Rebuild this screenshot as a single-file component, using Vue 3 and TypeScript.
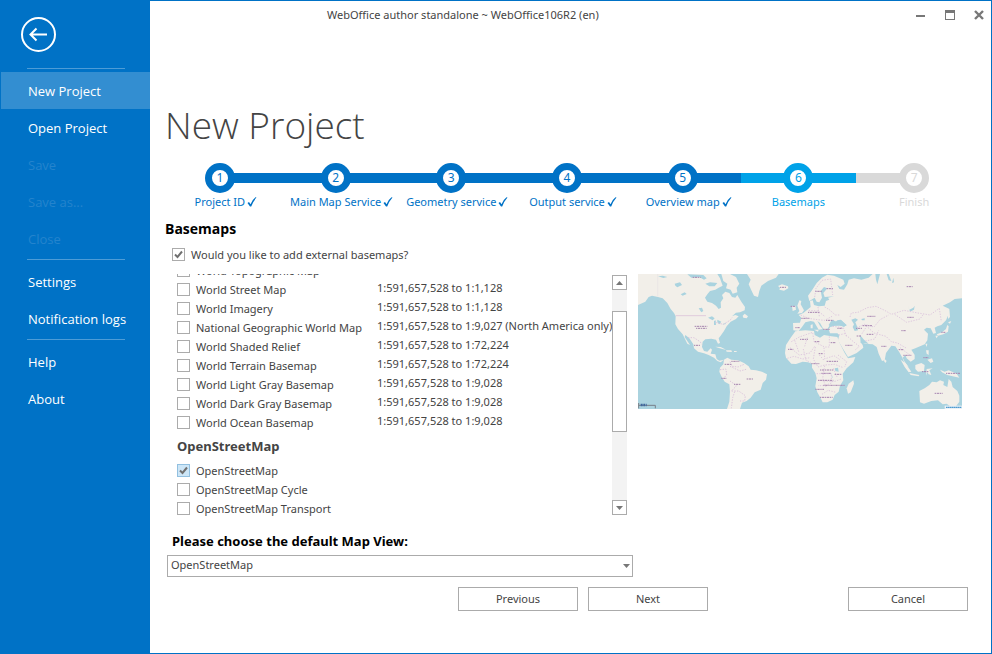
<script setup lang="ts">
import { ref } from 'vue'

interface MenuItem { label: string; active?: boolean; disabled?: boolean }
interface Step { label: string; state: 'done' | 'current' | 'todo' }
interface Basemap { name: string; scale: string; checked: boolean }

const menuGroups: MenuItem[][] = [
  [
    { label: 'New Project', active: true },
    { label: 'Open Project' },
    { label: 'Save', disabled: true },
    { label: 'Save as...', disabled: true },
    { label: 'Close', disabled: true },
  ],
  [{ label: 'Settings' }, { label: 'Notification logs' }],
  [{ label: 'Help' }, { label: 'About' }],
]

const steps: Step[] = [
  { label: 'Project ID', state: 'done' },
  { label: 'Main Map Service', state: 'done' },
  { label: 'Geometry service', state: 'done' },
  { label: 'Output service', state: 'done' },
  { label: 'Overview map', state: 'done' },
  { label: 'Basemaps', state: 'current' },
  { label: 'Finish', state: 'todo' },
]

const useExternal = ref(true)
const defaultView = ref('OpenStreetMap')

const worldMaps = ref<Basemap[]>([
  { name: 'World Topographic Map', scale: '', checked: false },
  { name: 'World Street Map', scale: '1:591,657,528 to 1:1,128', checked: false },
  { name: 'World Imagery', scale: '1:591,657,528 to 1:1,128', checked: false },
  { name: 'National Geographic World Map', scale: '1:591,657,528 to 1:9,027 (North America only)', checked: false },
  { name: 'World Shaded Relief', scale: '1:591,657,528 to 1:72,224', checked: false },
  { name: 'World Terrain Basemap', scale: '1:591,657,528 to 1:72,224', checked: false },
  { name: 'World Light Gray Basemap', scale: '1:591,657,528 to 1:9,028', checked: false },
  { name: 'World Dark Gray Basemap', scale: '1:591,657,528 to 1:9,028', checked: false },
  { name: 'World Ocean Basemap', scale: '1:591,657,528 to 1:9,028', checked: false },
])

const osmMaps = ref<Basemap[]>([
  { name: 'OpenStreetMap', scale: '', checked: true },
  { name: 'OpenStreetMap Cycle', scale: '', checked: false },
  { name: 'OpenStreetMap Transport', scale: '', checked: false },
])
</script>

<template>
  <div class="window">
    <aside class="sidebar">
      <button class="back" type="button" aria-label="Back">
        <svg viewBox="0 0 36 36" width="36" height="36" fill="none" stroke="#fff" stroke-width="2">
          <circle cx="18.5" cy="17.5" r="16.5" />
          <path d="M10 17.5H27M16.5 11.5L10.5 17.5L16.5 23.5" />
        </svg>
      </button>
      <nav>
        <ul v-for="(group, g) in menuGroups" :key="g" class="group">
          <li v-for="item in group" :key="item.label">
            <button type="button" class="item" :class="{ active: item.active }" :disabled="item.disabled">{{ item.label }}</button>
          </li>
        </ul>
      </nav>
    </aside>

    <main class="main">
      <header class="titlebar">
        <span class="caption">WebOffice author standalone ~ WebOffice106R2 (en)</span>
        <div class="controls">
          <button type="button" aria-label="Minimize">
            <svg viewBox="0 0 12 12" width="12" height="12"><path d="M1 6h9v2H1z" fill="#777" /></svg>
          </button>
          <button type="button" aria-label="Maximize">
            <svg viewBox="0 0 12 12" width="12" height="12"><path d="M1 1h10v10H1zM2 4v6h8V4z" fill="#777" fill-rule="evenodd" /></svg>
          </button>
          <button type="button" aria-label="Close">
            <svg viewBox="0 0 12 12" width="12" height="12"><path d="M2 2L10 10M10 2L2 10" stroke="#777" stroke-width="2.4" /></svg>
          </button>
        </div>
      </header>

      <h1>New Project</h1>

      <ol class="steps">
        <li v-for="(step, i) in steps" :key="step.label" class="step" :class="step.state">
          <div class="track"><span class="dot">{{ i + 1 }}</span></div>
          <div class="step-label">
            <span class="step-text">{{ step.label }}</span>
            <svg v-if="step.state === 'done'" class="tick" viewBox="0 0 10 10" width="10" height="10">
              <path d="M0.5 6L2 5L3.5 7.2Q5.5 2.5 8.5 0.3L9.5 0.6Q6 4.5 4.2 9.6H3Z" fill="#0072c6" />
            </svg>
          </div>
        </li>
      </ol>

      <h2>Basemaps</h2>
      <label class="check external">
        <input v-model="useExternal" type="checkbox" />
        <span>Would you like to add external basemaps?</span>
      </label>

      <div class="columns">
        <div class="picker">
          <div class="list">
            <div v-for="map in worldMaps" :key="map.name" class="row">
              <label class="check"><input v-model="map.checked" type="checkbox" /><span>{{ map.name }}</span></label>
              <span class="scale">{{ map.scale }}</span>
            </div>
            <h3>OpenStreetMap</h3>
            <div v-for="map in osmMaps" :key="map.name" class="row">
              <label class="check"><input v-model="map.checked" type="checkbox" :class="{ hot: map.checked }" /><span>{{ map.name }}</span></label>
            </div>
          </div>
          <div class="scrollbar">
            <button type="button" aria-label="Scroll up"><svg viewBox="0 0 7 4" width="7" height="4"><path d="M0 4L3.5 0L7 4Z" fill="#777" /></svg></button>
            <div class="rail"><div class="thumb"></div></div>
            <button type="button" aria-label="Scroll down"><svg viewBox="0 0 7 4" width="7" height="4"><path d="M0 0H7L3.5 4Z" fill="#777" /></svg></button>
          </div>
        </div>

        <svg class="map" viewBox="0 0 972 405" role="img" aria-label="World map preview">
          <rect width="972" height="405" fill="#aad3df" />
          <g transform="translate(-24 -27)">
            <g fill="#f2efe9">
              <path d="M24 27H262L270 40L278 62L266 68L256 74L240 78L232 88L225 98L232 110L246 114L258 122L266 132L273 128L272 112L280 100L276 90L286 80L298 84L306 96L316 98L322 90L334 110L345 126L344 136L330 142L318 143L306 154L316 150L326 154L318 162L302 170L290 184L282 198L272 212L266 220L270 234L264 236L258 224L244 221L226 223L218 230L216 246L222 258L232 260L242 250L246 254L242 266L256 268L260 282L268 287L276 286L282 284L272 292L262 288L252 278L236 270L222 265L204 260L192 250L190 238L178 220L166 210L164 216L180 240L172 236L158 208L144 192L136 178L137 154L132 144L122 132L112 114L98 100L84 96L66 92L56 96L46 110L24 120Z" />
              <path d="M351 27H446L438 38L414 48L394 62L388 78L384 96L372 92L364 76L356 58L362 44Z" />
              <path d="M274 27H300L318 36L328 56L320 68L322 82L308 86L302 74L288 70L292 56L280 48Z" />
              <path d="M444 63L456 58L474 64L475 70L462 77L448 74L450 68Z" />
              <path d="M338 152L344 146L354 154L350 160L340 158Z" />
              <path d="M256 245L272 246L288 254L280 253L264 248ZM288 256L304 256L306 261L290 260ZM312 258H320V261H312Z" />
              <path d="M282 284L292 278L304 284L324 286L342 294L356 304L362 314L378 316L396 320L411 328L408 344L398 354L392 374L374 382L362 398L350 408L336 413L330 432H291L298 410L300 380L298 358L284 350L274 334L268 320L270 308L280 298Z" />
            </g>
            <g fill="#aad3df">
              <path d="M134 56L150 52L156 60L142 67L136 62ZM152 88L164 82L170 87L158 92ZM206 130L216 128L220 138L214 142ZM234 158L246 154L254 160L248 166ZM252 168L257 166L258 180L252 180ZM262 164L274 170L268 178L262 172ZM276 178L288 174L286 178ZM84 34L98 32L112 36L100 39ZM172 28L220 30L230 40L222 44L208 36L184 38ZM226 56L240 52L262 54L254 64L238 64Z" />
            </g>
            <path d="M137 152H228" stroke="#e0cbdc" stroke-width="3" />
            <path d="M83 27V94" stroke="#e8e2e4" stroke-width="2" />
            <g fill="none" stroke="#dcc4dc" stroke-width="3" stroke-dasharray="4 4">
              <path d="M174 218H192L210 230L216 238M256 172L280 178L300 166L306 158M300 290L306 304L324 306L342 298M270 314L288 312L290 330L276 344M300 348L320 362L304 378L326 378L346 392L344 408L330 408M314 380L308 398L304 430M300 304L330 318L352 312" />
            </g>
            <g stroke="#a585ad" stroke-width="3" stroke-dasharray="4 2 7 2">
              <path d="M194 184H232M198 190H230M188 37H212M192 241H210M450 67H468M304 289H328M284 298H306M274 340H290M312 358H332M350 342H370" />
            </g>
            <path d="M26 414V430M26 421H76V430" fill="none" stroke="#777f89" stroke-width="3" />
            <path d="M32 420H50" stroke="#40679c" stroke-width="8" stroke-dasharray="6 2" />
          </g>
          <g transform="translate(456 -27)">
            <g fill="#f2efe9">
              <path d="M10 196L9 174L30 173L34 158L26 150L40 144L52 134L62 126L60 108L68 106L72 120L86 124L104 122L108 108L118 104L114 98L132 94L104 96L100 84L112 70L102 66L92 78L96 98L88 112L80 110L74 98L58 108L54 92L66 76L80 54L96 38L112 29L132 32L160 44L164 56L152 66L142 60L148 72L162 74L172 58L176 44L192 40L214 44L236 38L248 27H516V100L494 102L480 112L458 122L474 130L474 152L468 166L454 180L442 184L434 188L438 204L430 206L422 190L410 188L402 194L414 206L412 226L404 238L390 244L376 250L364 254L374 270L374 282L362 290L350 280L346 270L338 278L344 290L356 306L346 300L336 276L328 262L316 244L304 242L288 264L284 286L276 288L266 266L260 246L248 238L226 236L212 232L218 240L220 248L200 264L174 276L158 250L144 226L148 210L142 205L120 205L116 192L124 182L148 180L162 186L170 180L152 164L142 166L136 172L126 168L120 180L112 192L104 196L98 188L90 174L82 168L90 182L98 192L86 194L72 170L62 168L46 172L36 186L26 198Z" />
              <path d="M16 199L46 196L72 198L74 210L90 218L102 210L124 214L142 216L150 236L164 264L174 280L196 276L190 292L170 310L158 326L160 346L150 362L146 380L134 390L128 404L112 412L98 412L92 400L82 382L76 364L80 340L76 324L66 308L66 296L54 292L38 290L18 297L4 296L-12 278L-15 264L-12 240L2 218Z" />
              <path d="M170 370L176 356L190 346L192 356L182 382L174 386Z" />
              <path d="M22 122L28 106L34 108L32 118L42 136L36 144L22 146L28 138ZM6 124L16 122L18 134L8 138ZM72 194L86 194L84 200ZM62 180L68 178V190H62Z" />
              <path d="M388 378L404 370L418 360L426 350L440 352L450 346L462 350L460 360L472 366L476 342L484 350L488 366L502 378L508 392L508 410L498 424L484 426L470 416L458 418L444 406L424 408L402 416L390 412Z" />
              <path d="M332 284L346 294L364 320L356 322L344 306ZM358 324L388 330L386 334L362 330ZM376 300L394 294L404 300L402 318L384 320L376 312ZM410 312L428 310L418 316L424 330L416 328L412 322L408 332ZM450 314L464 320L476 316L500 326L508 338L488 334L472 330L456 322ZM408 256L416 256L416 270L410 266ZM412 284L426 280L430 290L422 294ZM406 236L412 236L410 246ZM284 282L290 288L286 294L282 288Z" />
              <path d="M474 172L484 168L480 176ZM472 180L476 184L474 200L460 208L444 212L440 208L456 202L468 192ZM474 130L478 132L480 156L474 162ZM436 212H444L440 220Z" />
            </g>
            <g fill="#aad3df">
              <path d="M116 180L126 164L140 170L154 166L170 182L160 184L148 182L134 182L122 186ZM184 164L196 160L204 164L196 172L202 186L204 196L194 198L188 186L192 178ZM214 162L224 160V166H216ZM354 120L358 134L370 128L374 122L372 134L360 140ZM134 310L144 308L146 320L136 318ZM124 322L128 338L126 338ZM210 210L222 224L236 236L212 234ZM256 27H270L262 58L258 44ZM290 27H296L304 48L296 46ZM310 38L306 54L312 52Z" />
            </g>
            <g fill="none" stroke="#dfc9df" stroke-width="3" stroke-dasharray="4 4">
              <path d="M32 150L56 160L82 164L104 166L126 154M56 136L84 138L104 154M104 126L118 134L136 150L148 150M74 96L78 70L96 46L122 42L128 90M84 126L88 154M180 156L184 144L204 142L232 128L258 124L284 136L304 148L342 136L384 144L420 150L448 130L454 170M200 188L224 178L252 186L270 164L296 150M216 206L230 184L252 204L288 214L304 230L322 234L350 250M226 228L254 222L266 196M314 148L350 172L390 162L400 148M128 184L160 188L170 216M146 210L164 206L190 230L208 244L194 256M330 248L346 260L360 270" />
              <path d="M4 230L28 216L68 202L72 230L104 246L118 246L118 214M0 248L28 270L60 264L74 244M-8 280L12 274L38 282L60 278M40 252L48 286L62 292M76 246L70 282L84 306L104 300L134 298L160 308M102 248L104 282L132 272L150 284M80 326H124V354L104 362H84M86 346L132 350L154 342M96 388L114 376L138 382M130 310L142 338M104 302L98 340L108 366M144 270L170 290L164 306M88 270L102 286M14 226L26 260M52 218L44 244" />
            </g>
            <g stroke="#a784b0" stroke-width="3" stroke-dasharray="4 2 7 2">
              <path d="M16 188H30M34 160H58M54 142H88M100 193H120M110 71H130M76 79H96M350 65H368M232 154H256M352 157H372M218 182H248M230 208H252M198 190H216M334 197H348M274 244H290M166 241H188M200 213H214M142 190H158M74 230H90M30 223H54M-6 253H10M86 266H98M122 233H138M110 289H144M64 296H88M90 315H130M94 325H122M84 346H130M100 361H164M76 373H102M90 397H128M134 328H156M326 254H342M340 271H364M396 320H416M400 278H416M468 325H510M434 385H458M454 202H466M108 166H130M2 124H16" />
            </g>
            <path d="M464 422H516V432H464Z" fill="#e9f0f5" />
            <path d="M468 427H514" stroke="#4d9bd1" stroke-width="4" stroke-dasharray="5 1" />
          </g>
        </svg>
      </div>

      <div class="default-view">
        <label for="default-view">Please choose the default Map View:</label>
        <div class="select">
          <select id="default-view" v-model="defaultView">
            <option v-for="map in osmMaps" :key="map.name">{{ map.name }}</option>
          </select>
          <svg viewBox="0 0 7 4" width="7" height="4"><path d="M0 0H7L3.5 4Z" fill="#777" /></svg>
        </div>
      </div>

      <footer class="actions">
        <button type="button">Previous</button>
        <button type="button">Next</button>
        <button type="button" class="cancel">Cancel</button>
      </footer>
    </main>
  </div>
</template>

<style>
body {
  margin: 0;
}
</style>

<style scoped>
* {
  box-sizing: border-box;
}
.window {
  display: grid;
  grid-template-columns: 149px 1fr;
  min-height: 100vh;
  border: 1px solid #0072c6;
  background: #fff;
  color: #444;
  font: 11px/16px 'Noto Sans', 'Open Sans', sans-serif;
}
button,
select {
  font: inherit;
  color: inherit;
  border: 0;
  background: none;
  padding: 0;
}
h1, h2, h3, ul, ol {
  margin: 0;
  padding: 0;
  list-style: none;
}

.sidebar {
  background: #0072c6;
  padding-top: 16px;
  font-family: 'Open Sans', 'Noto Sans', sans-serif;
  font-size: 12px;
}
.back {
  display: block;
  width: 36px;
  height: 36px;
  margin: 0 0 15px 19px;
}
.back svg {
  display: block;
}
.group::before {
  content: '';
  display: block;
  height: 1px;
  margin: 2px 25px 3px 26px;
  background: #4d9cd7;
}
.item {
  display: block;
  width: 100%;
  height: 37px;
  padding: 1px 0 0 27px;
  text-align: left;
  color: #fff;
  font-size: 13px;
}
.item.active {
  background: #338ed1;
}
.item:disabled {
  color: #2484cd;
}

.main {
  display: flex;
  flex-direction: column;
  min-width: 0;
}
.titlebar {
  display: flex;
  justify-content: space-between;
  align-items: center;
  height: 27px;
  padding: 0 6px 0 177px;
}
.controls {
  display: flex;
  gap: 17px;
}
.controls button,
.controls svg {
  display: block;
  width: 12px;
  height: 12px;
}
h1 {
  margin: 69px 0 0 15px;
  font-family: 'Open Sans', 'Noto Sans', sans-serif;
  font-size: 37px;
  line-height: 56px;
  font-weight: 300;
}

.steps {
  display: grid;
  grid-template-columns: repeat(7, 1fr);
  margin: 10px 19px 0 12px;
  color: #0072c6;
}
.step.current {
  color: #00a2e8;
}
.step.todo {
  color: #d9d9d9;
}
.track {
  display: flex;
  justify-content: center;
  background: linear-gradient(currentColor, currentColor) center / 100% 10px no-repeat;
}
/* Let each bar reach under the next one, so that no seam shows between them. */
.done .track {
  margin-right: -1px;
  padding-right: 1px;
}
.step:first-child .track {
  background-position: right center;
  background-size: 50% 10px;
}
.step:last-child .track {
  background-position: left center;
  background-size: 50% 10px;
}
.dot {
  width: 30px;
  height: 30px;
  border: 7px solid currentColor;
  border-radius: 50%;
  background: #fff;
  text-align: center;
  font-size: 12px;
}
.step-label {
  display: grid;
  grid-template-columns: 1fr auto 1fr;
  align-items: center;
  column-gap: 2px;
  margin: 1px -8px 0;
  white-space: nowrap;
}
.step-text {
  grid-column: 2;
}

h2 {
  margin: 10px 0 0 15px;
  color: #000;
  font-family: 'Open Sans', 'Noto Sans', sans-serif;
  font-size: 14px;
  line-height: 18px;
}
.check {
  display: flex;
  align-items: center;
  gap: 6px;
  line-height: 15px;
  white-space: nowrap;
}
.check input {
  appearance: none;
  flex: none;
  width: 13px;
  height: 13px;
  margin: 0;
  border: 1px solid #ababab;
  background: #fff;
}
.check input:checked {
  background: url("data:image/svg+xml,%3Csvg xmlns='http://www.w3.org/2000/svg' viewBox='0 0 11 11'%3E%3Cpath d='M2 5.5L4.5 8L9 2.5' fill='none' stroke='%23707070' stroke-width='2'/%3E%3C/svg%3E");
}
.check input.hot:checked {
  border-color: #92c0e0;
  background-color: #cde6f7;
}
.external {
  margin: 9px 0 12px 22px;
}
.columns {
  display: flex;
  align-items: flex-start;
  gap: 11px;
  padding: 0 29px 0 27px;
}
.picker {
  display: flex;
  flex: 1;
  min-width: 0;
}
/* The list is scrolled, so its first row is cut off at the top. */
.list {
  display: flex;
  flex: 1;
  flex-direction: column;
  justify-content: flex-end;
  min-width: 0;
  height: 244px;
  overflow: hidden;
}
.row {
  display: grid;
  grid-template-columns: 200px 1fr;
  flex: none;
  height: 19px;
  align-items: center;
}
.scale {
  padding-bottom: 4px;
  line-height: 15px;
  white-space: nowrap;
}
h3 {
  flex: none;
  font-size: 13px;
  line-height: 29px;
}
.scrollbar {
  display: flex;
  flex-direction: column;
  width: 15px;
  height: 240px;
  margin-top: 1px;
  background: #f3f3f3;
}
.scrollbar button {
  display: grid;
  place-items: center;
  height: 15px;
  border: 1px solid #ababab;
  background: #fff;
}
.rail {
  flex: 1;
  padding-top: 21px;
}
.thumb {
  height: 121px;
  border: 1px solid #ababab;
  background: #fff;
}
.map {
  flex: none;
  width: 324px;
  height: 135px;
}

.default-view {
  width: 466px;
  margin: 14px 0 10px 17px;
}
.default-view label {
  display: block;
  padding-left: 5px;
  color: #000;
  font-size: 13px;
  line-height: 18px;
  font-weight: 700;
}
.select {
  display: grid;
  align-items: center;
  margin-top: 5px;
}
.select > * {
  grid-area: 1 / 1;
}
.select svg {
  justify-self: end;
  margin-right: 3px;
  pointer-events: none;
}
.select select {
  appearance: none;
  width: 100%;
  height: 22px;
  padding: 0 20px 2px 3px;
  border: 1px solid #ababab;
  border-radius: 0;
}
.actions {
  display: flex;
  gap: 10px;
  padding: 0 23px 42px 308px;
}
.actions button {
  width: 120px;
  height: 24px;
  border: 1px solid #ababab;
}
.actions .cancel {
  margin-left: auto;
}
</style>
